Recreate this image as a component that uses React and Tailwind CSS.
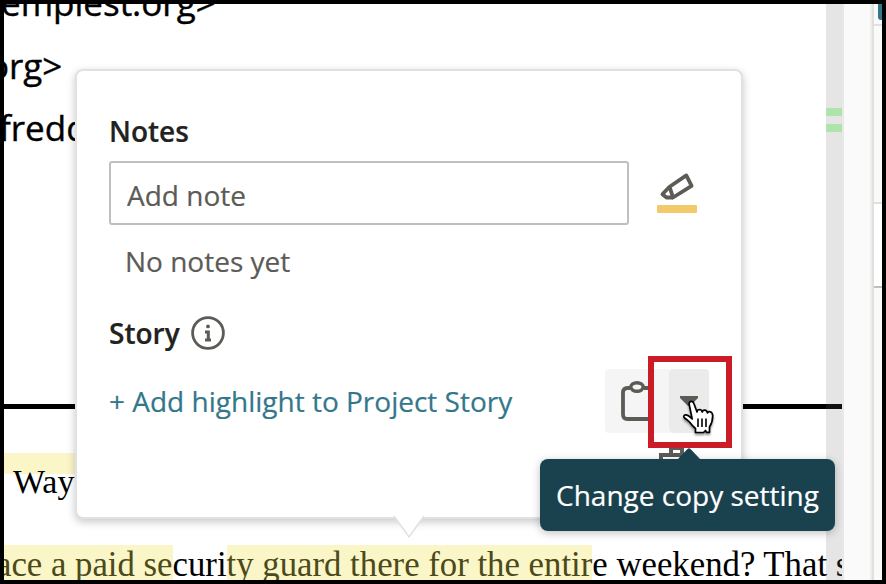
const sideRules = [
  { gap: 'h-[20px] bg-[#fafafa]', line: 'bg-[#e1e1e1]' },
  { gap: 'h-[176px] bg-[#fafaf8]', line: 'bg-[#e1e1e1]' },
  { gap: 'h-[82px] bg-white', line: 'bg-[#bfbfbc]' },
]

function HighlighterIcon() {
  return (
    <svg width="40" height="32" viewBox="0 0 40 32" fill="none" stroke="#5c5b55" strokeWidth="3.8" strokeLinejoin="round">
      <path d="M12.600 14.800L29.300 3.400L34.600 13.800L16 25.500Z" />
      <path d="M12.300 15L5.400 22.200L9.500 25.500H16" />
    </svg>
  )
}

function InfoIcon() {
  return (
    <svg width="34" height="34" viewBox="0 0 34 34" fill="none" stroke="#5c5b55">
      <circle cx="17" cy="17" r="15.4" strokeWidth="2.8" />
      <circle cx="17" cy="10.4" r="1.9" fill="#5c5b55" stroke="none" />
      <path d="M14 16H17.3V23.5M14 24H20" strokeWidth="3" />
    </svg>
  )
}

function ClipboardIcon() {
  return (
    <svg width="36" height="42" viewBox="0 0 36 42" fill="none" stroke="#5c5b55" strokeWidth="3.8">
      <path d="M9 8H6.500Q2 8 2 12.500V34.500Q2 39 6.500 39H26.500Q31 39 31 34.500V12.500Q31 8 26.500 8H23" />
      <ellipse cx="16" cy="7" rx="6.200" ry="4.300" strokeWidth="3.400" />
    </svg>
  )
}

function HandCursor() {
  return (
    <svg width="34" height="36" viewBox="0 0 34 36" className="drop-shadow-[0_2px_1px_rgba(0,0,0,0.4)]">
      <path
        d="M9.200 19L6.200 4.500Q5.800 1.800 8 1.400Q10.200 1.200 11 3.800L14 12Q14.200 9.500 16.500 9.500Q18.600 9.600 19.300 12Q19.800 10 21.700 10.200Q24 10.400 24.500 13Q25.200 11.300 27 11.700Q29.800 12.400 29.700 16Q29.700 22 26.500 27V32.300H23.500L22.500 30.500L20.500 32.500H12.500V28.500Q9 25.500 6.500 22Q3.800 19.500 1.600 18Q-0.200 16 2 14.900Q4.800 14.300 9.200 19Z"
        fill="white" stroke="black" strokeWidth="1.700" strokeLinejoin="round"
      />
      <path d="M15 18.500V27M19 18.500V27M23 18.500V27" stroke="black" strokeWidth="1.600" />
    </svg>
  )
}

function Document() {
  return (
    <main className="relative w-[838px] shrink-0 overflow-hidden bg-white text-black whitespace-nowrap">
      <div className="-mt-[32px] font-['Open_Sans',sans-serif] text-[35px] leading-[62.7px] [-webkit-text-stroke:0.4px]">
        <p className="-ml-[3px]">emplest.org&gt;</p>
        <p className="-ml-[16px]">org&gt;</p>
        <p className="-ml-[5px]">fredd</p>
      </div>
      <hr className="mt-[244px] h-[5px] border-0 bg-black" />
      <div className="font-['Liberation_Serif',serif] text-[34.75px] leading-[84px]">
        <div className="mt-[44px] h-[21px] w-[90px] bg-[#fbf6c8]" />
        <p className="-mt-[34px] pl-[9px] text-[34px]">Way</p>
        <p className="-ml-[8px] mt-[21px] leading-[40px]">
          <span className="bg-[#fbf6c8] pb-1 text-[#4c491a]">ace a paid se</span>curi
          <span className="bg-[#fbf6c8] pb-1 text-[#4c491a]">ty guard there for the entir</span>e weekend? That s
        </p>
      </div>
      {/* scroll track with match markers */}
      <div className="absolute inset-y-0 right-0 w-4 bg-[#646464]/17 pt-[104px]">
        <div className="h-2 bg-[#aee4aa]" />
        <div className="mt-2 h-2 bg-[#aee4aa]" />
      </div>
    </main>
  )
}

function NotesPopup() {
  return (
    <section className="absolute left-[71px] top-[65px] h-[450px] w-[668px] rounded-[8px] border-2 border-[#e1e1e1] bg-white px-8 pt-[42px] font-['Open_Sans',sans-serif] text-[28px] leading-9 text-[#5c5b57] shadow-[0_3px_8px_rgba(0,0,0,0.22)] [-webkit-text-stroke:0.2px]">
      <h2 className="font-semibold text-[#222220]">Notes</h2>
      <div className="mt-[12px] flex">
        <input placeholder="Add note" className="h-16 w-[520px] rounded-[3px] border-2 border-[#bfbfbb] px-4 pt-1 placeholder:text-[#5c5b57]" />
        <button className="ml-7 flex flex-col pt-[11px]">
          <HighlighterIcon />
          <span className="mt-px h-2 w-10 rounded-[1px] bg-[#f3ca69]" />
        </button>
      </div>
      <p className="mt-[18px] pl-4">No notes yet</p>
      <div className="mt-[36px] flex items-center gap-[11px]">
        <h2 className="font-semibold text-[#222220]">Story</h2>
        <InfoIcon />
      </div>
      <div className="mt-[18px] flex items-start">
        <a className="w-[496px] whitespace-nowrap pt-[14px] text-[#33778b]">+ Add highlight to Project Story</a>
        <button className="flex h-16 w-16 items-start rounded-l-[4px] bg-[#f5f5f5] pl-4 pt-[11px]">
          <ClipboardIcon />
        </button>
        <button className="flex h-16 w-10 justify-center rounded-[4px] bg-[#ebebeb] pt-[27px]">
          <svg width="20" height="12" viewBox="0 0 20 12" fill="#5c5b55">
            <path d="M1 0H19V2L11 10H9L1 2Z" />
          </svg>
        </button>
      </div>
      <svg className="ml-[549px] mt-[14px]" width="34" height="16" viewBox="0 0 34 16" fill="none" stroke="#5c5b55" strokeWidth="4">
        <path d="M3 16V8H28V16M13 8V1H24V8" />
      </svg>
      <svg className="absolute -bottom-[22px] left-[316px]" width="34" height="24" viewBox="0 0 34 24">
        <path d="M1 1L16 22L31 1" fill="white" stroke="#e1e1e1" strokeWidth="1.500" />
      </svg>
    </section>
  )
}

export default function App() {
  return (
    <div className="relative flex h-[584px] w-[886px] overflow-hidden border-4 border-black bg-white">
      <Document />
      <div className="w-[2px] bg-[#e8e8e8]" />
      <div className="w-[26px] bg-[#fafafa]" />
      <div className="w-[2px] bg-[#eeeeed]" />
      <div className="w-[2px] bg-[#e0e0dd]" />
      <aside className="relative flex flex-1 flex-col bg-[#fafaf8]">
        {sideRules.map((rule, i) => (
          <div key={i}>
            <div className={rule.gap} />
            <div className={`h-[2px] ${rule.line}`} />
          </div>
        ))}
        <div className="absolute right-0 top-0 h-4 w-1 rounded-bl-[3px] bg-[#33778b]" />
      </aside>

      <NotesPopup />

      {/* callout */}
      <div className="absolute left-[644px] top-[352px] h-[92px] w-[84px] border-6 border-[#cb1b26]" />
      <div className="absolute left-[679px] top-[396px]">
        <HandCursor />
      </div>

      {/* tooltip */}
      <div className="absolute left-[536px] top-[455px] flex h-[72px] w-[295px] items-center justify-center rounded-[8px] bg-[#19424e] font-['Open_Sans',sans-serif] text-[28px] leading-9 text-white whitespace-nowrap shadow-[0_2px_8px_rgba(0,0,0,0.25)] [-webkit-text-stroke:0.2px]">
        Change copy setting
        <svg className="absolute -top-[11px] left-[137px]" width="24" height="12" viewBox="0 0 24 12" fill="#19424e">
          <path d="M0 12L10.500 1Q12 -0.500 13.500 1L24 12Z" />
        </svg>
      </div>
    </div>
  )
}
